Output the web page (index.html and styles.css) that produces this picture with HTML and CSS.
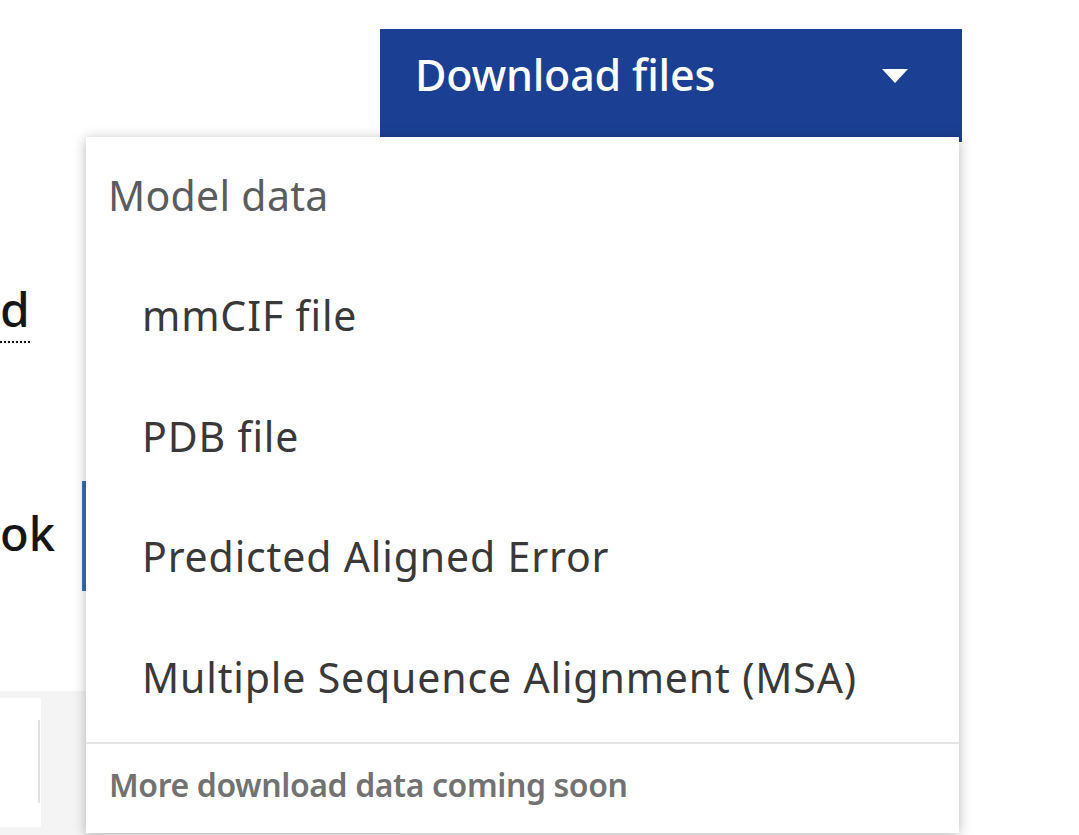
FILE: index.html
```html
<!DOCTYPE html>
<html lang="en">
<head>
<meta charset="utf-8">
<title>Download files</title>
<link rel="stylesheet" href="styles.css">
</head>
<body>
<div class="page">
  <header class="toolbar">
    <div class="dropdown">
      <button class="dl-btn" type="button">
        <span class="dl-label">Download files</span>
        <svg class="caret" width="26" height="14" viewBox="0 0 26 14" aria-hidden="true"><polygon points="0,0 26,0 13,14" fill="#ffffff"/></svg>
      </button>
      <div class="menu" role="menu">
        <div class="menu-title">Model data</div>
        <ul class="menu-list">
          <li class="menu-item">mmCIF file</li>
          <li class="menu-item">PDB file</li>
          <li class="menu-item">Predicted Aligned Error</li>
          <li class="menu-item">Multiple Sequence Alignment (MSA)</li>
        </ul>
        <div class="menu-footer">More download data coming soon</div>
      </div>
    </div>
  </header>
  <aside class="side">
    <div class="side-link"><span class="dotted">d</span></div>
    <div class="side-tab">ok</div>
    <div class="side-panel">
      <div class="panel-box"><div class="panel-rule"></div></div>
    </div>
  </aside>
</div>
</body>
</html>
```

FILE: styles.css
```css
html, body {
  margin: 0;
  padding: 0;
  background: #ffffff;
}
body {
  font-family: "Noto Sans", "Open Sans", Arial, sans-serif;
  color: #161616;
}
.page {
  position: relative;
  width: 1079px;
  height: 835px;
  overflow: hidden;
}
.toolbar {
  display: flex;
  justify-content: flex-end;
  padding: 29px 117px 0 0;
}
.dropdown {
  position: relative;
  height: 120px;
}
.dl-btn {
  display: flex;
  align-items: flex-start;
  justify-content: space-between;
  width: 582px;
  height: 113px;
  box-sizing: border-box;
  padding: 16px 54px 0 35px;
  border: 0;
  margin: 0;
  background: #1b4093;
  color: #ffffff;
  font-family: inherit;
  font-size: 43px;
  font-weight: 500;
  line-height: 60px;
  letter-spacing: -0.2px;
  text-align: left;
  cursor: pointer;
}
.caret {
  margin-top: 24px;
}
.menu {
  position: absolute;
  top: 108px;
  left: -294px;
  width: 873px;
  height: 696px;
  box-sizing: border-box;
  background: #ffffff;
  box-shadow: 0 2px 12px rgba(0, 0, 0, 0.28);
  padding-top: 28px;
  z-index: 2;
}
.menu-title {
  padding-left: 22px;
  font-size: 41px;
  line-height: 60px;
  letter-spacing: 0.3px;
  color: #5a5c5e;
  margin-bottom: 30px;
}
.menu-list {
  list-style: none;
  margin: 0;
  padding: 0 0 5px 0;
}
.menu-item {
  padding-left: 56px;
  font-size: 41px;
  line-height: 120.5px;
  letter-spacing: 0.85px;
  color: #393939;
}
.menu-footer {
  border-top: 2px solid #e4e4e4;
  padding: 16px 0 0 23px;
  font-size: 32px;
  font-weight: 600;
  line-height: 50px;
  letter-spacing: -0.4px;
  color: #727272;
}
.side {
  width: 86px;
}
.side-link {
  margin-top: 130px;
  font-size: 48px;
  font-weight: 500;
  line-height: 60px;
  white-space: nowrap;
}
.dotted {
  border-bottom: 2px dotted #161616;
}
.side-tab {
  margin-top: 142px;
  height: 110px;
  box-sizing: border-box;
  border-right: 4px solid #3f6db4;
  font-size: 47px;
  font-weight: 500;
  line-height: 104px;
  white-space: nowrap;
}
.side-panel {
  margin-top: 100px;
  width: 400px;
  height: 144px;
  box-sizing: border-box;
  padding-top: 7px;
  background: #f4f4f4;
}
.panel-box {
  width: 41px;
  height: 129px;
  box-sizing: border-box;
  padding-top: 22px;
  background: #ffffff;
}
.panel-rule {
  width: 40px;
  height: 83px;
  box-sizing: border-box;
  border-right: 2px solid #e0e0e0;
}
```
